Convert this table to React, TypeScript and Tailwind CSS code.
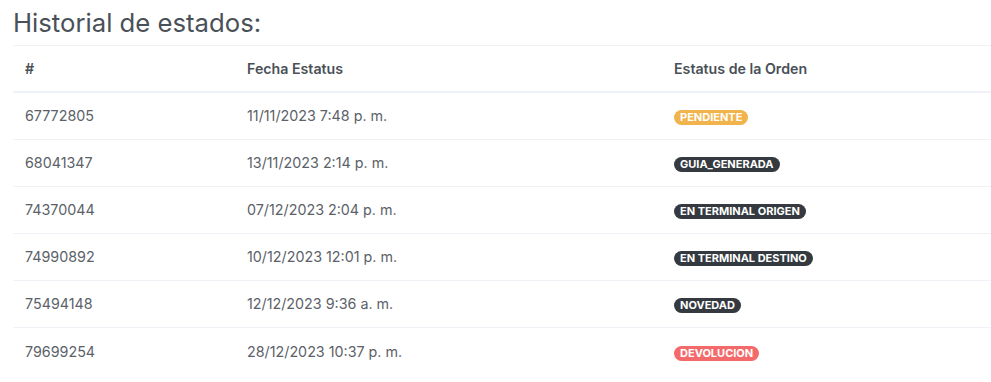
import React from "react";

type Row = {
  id: string;
  fecha: string;
  estatus: string;
  tone: "warning" | "dark" | "danger";
};

const rows: Row[] = [
  { id: "67772805", fecha: "11/11/2023 7:48 p. m.", estatus: "PENDIENTE", tone: "warning" },
  { id: "68041347", fecha: "13/11/2023 2:14 p. m.", estatus: "GUIA_GENERADA", tone: "dark" },
  { id: "74370044", fecha: "07/12/2023 2:04 p. m.", estatus: "EN TERMINAL ORIGEN", tone: "dark" },
  { id: "74990892", fecha: "10/12/2023 12:01 p. m.", estatus: "EN TERMINAL DESTINO", tone: "dark" },
  { id: "75494148", fecha: "12/12/2023 9:36 a. m.", estatus: "NOVEDAD", tone: "dark" },
  { id: "79699254", fecha: "28/12/2023 10:37 p. m.", estatus: "DEVOLUCION", tone: "danger" },
];

const badgeTone = {
  warning: "bg-[#f1b44c]",
  dark: "bg-[#343a40]",
  danger: "bg-[#f46a6a]",
};

const App = () => {
  return (
    <div className="bg-white w-[991px] h-[382px] overflow-hidden font-['Inter',sans-serif]">
      <div className="pl-[13px] pt-[6px]">
        <h4 className="text-[25.7px] leading-[33px] text-[#495057] font-normal mb-[6px]">
          Historial de estados:
        </h4>

        {/* Tabla */}
        <div className="border-t border-[#eff2f7]">
          <div className="grid grid-cols-[222px_427px_1fr] h-[47px] items-center border-b-2 border-[#eff2f7] text-[14.2px] font-semibold text-[#495057]">
            <div className="px-3">#</div>
            <div className="px-3">Fecha Estatus</div>
            <div className="px-3">Estatus de la Orden</div>
          </div>
          {rows.map((row, i) => (
            <div
              key={row.id}
              className={`grid grid-cols-[222px_427px_1fr] h-[47px] items-center text-[14.3px] text-[#5b6168] ${
                i < rows.length - 1 ? "border-b border-[#eff2f7]" : ""
              }`}
            >
              <div className="px-3">{row.id}</div>
              <div className="px-3">{row.fecha}</div>
              <div className="px-3">
                <span
                  className={`inline-block rounded-full px-[6px] text-[11px] leading-[15px] font-bold text-white ${badgeTone[row.tone]}`}
                >
                  {row.estatus}
                </span>
              </div>
            </div>
          ))}
        </div>
      </div>
    </div>
  );
};

export default App;
